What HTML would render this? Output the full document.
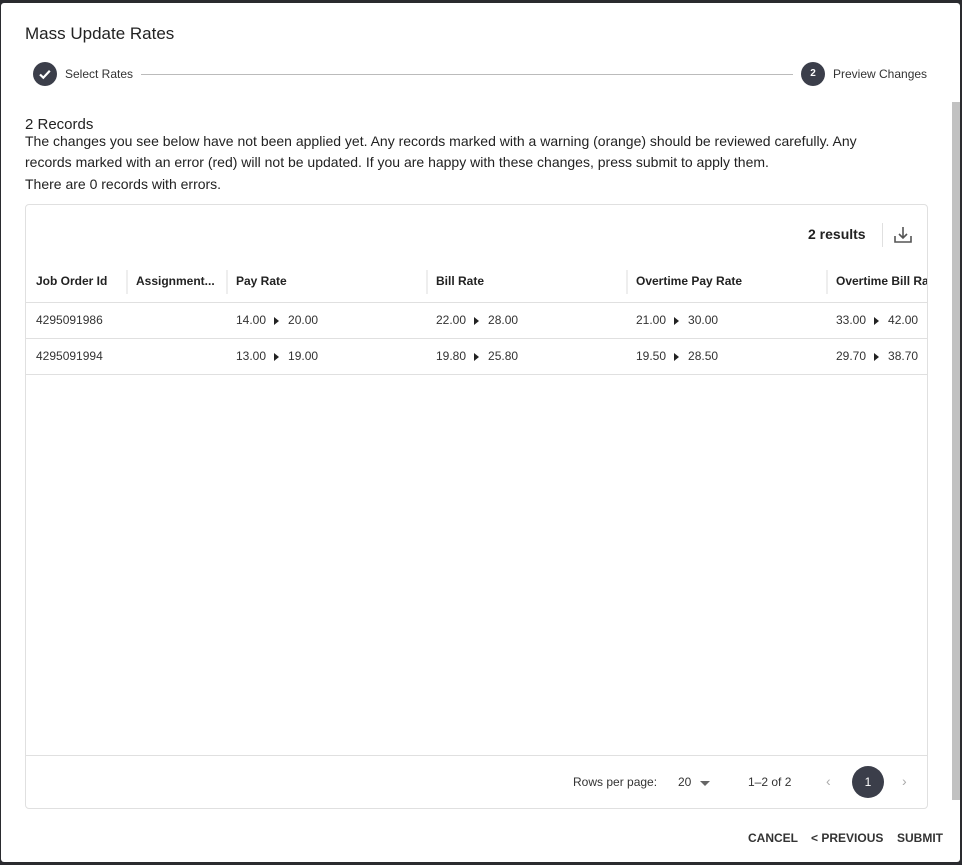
<!DOCTYPE html>
<html><head><meta charset="utf-8"><style>
*{box-sizing:border-box;margin:0;padding:0}
html,body{width:962px;height:865px;overflow:hidden;background:#2a2b2f;font-family:"Liberation Sans",sans-serif;color:#222}
.dlg{position:absolute;left:1px;top:3px;width:959px;height:859px;background:#fff;border-radius:3px;overflow:hidden}
.abs{position:absolute;white-space:nowrap}
.title{left:24px;top:21px;font-size:17px;color:#222}
.circ{position:absolute;width:24px;height:24px;border-radius:50%;background:#3b3e4a;color:#fff;font-size:10px;text-align:center;line-height:24px;font-weight:bold}
.step{font-size:12px;color:#333}
.sb{position:absolute;left:951px;top:99px;width:9px;height:698px;background:#c1c1c1}
.txt{left:24px;font-size:14px;color:#222;line-height:21px}
.card{position:absolute;left:24px;top:201px;width:903px;height:605px;border:1px solid #e0e0e0;border-radius:4px;overflow:hidden;background:#fff}
.th{position:absolute;top:69px;font-size:12px;font-weight:bold;color:#222;white-space:nowrap}
.sep{position:absolute;top:65px;width:2px;height:24px;background:#eee}
.hl{position:absolute;left:0;width:903px;height:1px;background:#e0e0e0}
.td{position:absolute;font-size:12px;color:#333;white-space:nowrap}
.tri{display:inline-block;width:0;height:0;border-left:5px solid #222;border-top:4px solid transparent;border-bottom:4px solid transparent;margin:0 9px 0 8px;vertical-align:-1px}
.btn{position:absolute;top:828px;font-size:12px;font-weight:bold;color:#333}
</style></head><body>
<div class="dlg">
<div class="abs title">Mass Update Rates</div>
<div class="circ" style="left:32px;top:59px"><svg width="24" height="24" viewBox="0 0 24 24"><path d="M7 12.5l3.3 3.2 6.5-7" stroke="#fff" stroke-width="2.2" fill="none"/></svg></div>
<div class="abs step" style="left:64px;top:64px">Select Rates</div>
<div style="position:absolute;left:140px;top:71px;width:652px;height:1px;background:#bbb"></div>
<div class="circ" style="left:800px;top:59px">2</div>
<div class="abs step" style="left:832px;top:64px">Preview Changes</div>
<div class="sb"></div>
<div class="abs txt" style="top:111px;font-size:15px">2 Records</div>
<div class="abs txt" style="top:128px">The changes you see below have not been applied yet. Any records marked with a warning (orange) should be reviewed carefully. Any</div>
<div class="abs txt" style="top:149px">records marked with an error (red) will not be updated. If you are happy with these changes, press submit to apply them.</div>
<div class="abs txt" style="top:171px">There are 0 records with errors.</div>
<div class="card">
<div class="abs" style="left:782px;top:21px;font-size:14px;font-weight:bold;color:#222">2 results</div>
<div style="position:absolute;left:856px;top:18px;width:1px;height:24px;background:#e0e0e0"></div>
<svg style="position:absolute;left:866px;top:19px" width="22" height="22" viewBox="0 0 22 22"><path d="M3 12v6h16v-6M11 3v11M7 10l4 4 4-4" stroke="#555" stroke-width="1.6" fill="none"/></svg>
<div class="th" style="left:10px">Job Order Id</div>
<div class="sep" style="left:100px"></div>
<div class="th" style="left:110px">Assignment...</div>
<div class="sep" style="left:200px"></div>
<div class="th" style="left:210px">Pay Rate</div>
<div class="sep" style="left:400px"></div>
<div class="th" style="left:410px">Bill Rate</div>
<div class="sep" style="left:600px"></div>
<div class="th" style="left:610px">Overtime Pay Rate</div>
<div class="sep" style="left:800px"></div>
<div class="th" style="left:810px">Overtime Bill Rate</div>
<div class="hl" style="top:97px"></div>
<div class="hl" style="top:133px"></div>
<div class="hl" style="top:169px"></div>
<div class="td" style="left:10px;top:108px">4295091986</div>
<div class="td" style="left:210px;top:108px">14.00<span class="tri"></span>20.00</div>
<div class="td" style="left:410px;top:108px">22.00<span class="tri"></span>28.00</div>
<div class="td" style="left:610px;top:108px">21.00<span class="tri"></span>30.00</div>
<div class="td" style="left:810px;top:108px">33.00<span class="tri"></span>42.00</div>
<div class="td" style="left:10px;top:144px">4295091994</div>
<div class="td" style="left:210px;top:144px">13.00<span class="tri"></span>19.00</div>
<div class="td" style="left:410px;top:144px">19.80<span class="tri"></span>25.80</div>
<div class="td" style="left:610px;top:144px">19.50<span class="tri"></span>28.50</div>
<div class="td" style="left:810px;top:144px">29.70<span class="tri"></span>38.70</div>
<div class="hl" style="top:550px"></div>
<div class="td" style="left:547px;top:570px">Rows per page:</div>
<div class="td" style="left:652px;top:570px">20</div>
<div style="position:absolute;left:674px;top:576px;border-top:5px solid #666;border-left:5px solid transparent;border-right:5px solid transparent"></div>
<div class="td" style="left:722px;top:570px">1–2 of 2</div>
<div class="td" style="left:800px;top:568px;color:#aaa;font-size:14px">‹</div>
<div class="circ" style="left:826px;top:561px;width:32px;height:32px;line-height:32px;font-size:12px;font-weight:normal">1</div>
<div class="td" style="left:876px;top:568px;color:#aaa;font-size:14px">›</div>
</div>
<div class="btn" style="left:747px">CANCEL</div>
<div class="btn" style="left:810px">&lt; PREVIOUS</div>
<div class="btn" style="left:896px">SUBMIT</div>
</div>
</body></html>
